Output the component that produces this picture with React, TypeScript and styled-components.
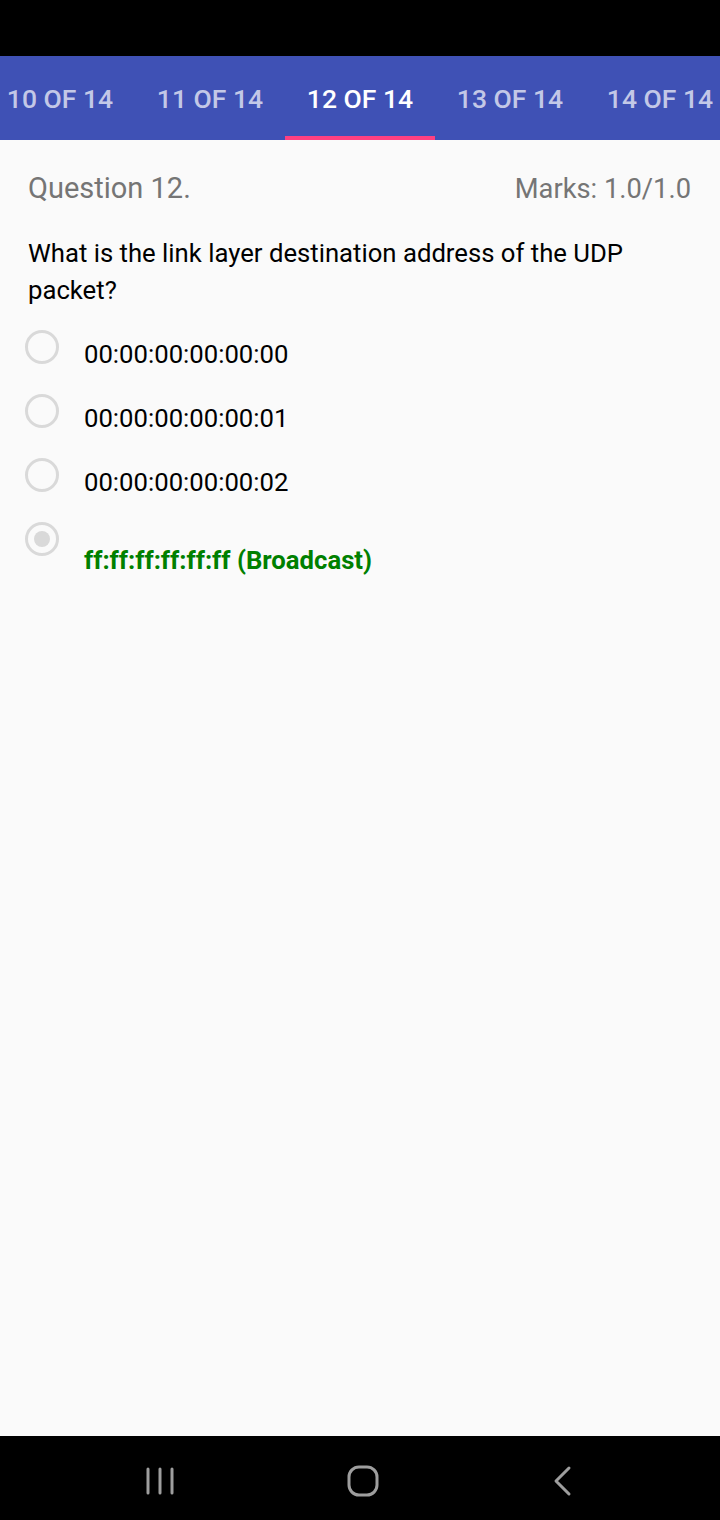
import React from "react";
import styled, { createGlobalStyle } from "styled-components";

const Global = createGlobalStyle`
  html, body { margin: 0; padding: 0; }
  body { font-family: Roboto, "Noto Sans", sans-serif; background: #000; }
  #root { width: 720px; height: 1520px; }
`;

const Screen = styled.div`
  width: 720px;
  height: 1520px;
  display: flex;
  flex-direction: column;
  overflow: hidden;
`;

const StatusBar = styled.div`
  height: 56px;
  background: #000;
  flex: none;
`;

const TabBar = styled.div`
  height: 84px;
  flex: none;
  background: #3f51b5;
  display: flex;
  overflow: hidden;
`;

const TabStrip = styled.div`
  display: flex;
  margin-left: -15px;
`;

const Tab = styled.div<{ $active?: boolean }>`
  width: 150px;
  flex: none;
  display: flex;
  align-items: center;
  justify-content: center;
  font-size: 26.5px;
  font-weight: 500;
  color: ${(p) => (p.$active ? "#ffffff" : "rgba(255,255,255,0.7)")};
  box-shadow: ${(p) => (p.$active ? "inset 0 -4px 0 #ff4081" : "none")};
  padding-top: 1px;
  box-sizing: border-box;
  white-space: nowrap;
`;

const Content = styled.div`
  flex: 1;
  background: #fafafa;
  padding: 31px 28px 0 28px;
`;

const Header = styled.div`
  display: flex;
  justify-content: space-between;
  align-items: baseline;
  font-size: 29px;
  line-height: 34px;
  color: #757575;
`;

const Marks = styled.span`
  font-size: 27.3px;
  margin-right: 1px;
`;

const QuestionText = styled.div`
  margin-top: 29px;
  font-size: 25.7px;
  line-height: 37px;
  color: #000;
`;

const Options = styled.div`
  margin-top: 15px;
  display: flex;
  flex-direction: column;
`;

const Row = styled.div`
  height: 64px;
  display: flex;
  align-items: flex-start;
  gap: 25px;
`;

const Radio = styled.div<{ $checked?: boolean }>`
  width: 34px;
  height: 34px;
  box-sizing: border-box;
  border: 3px solid #d9d9d9;
  border-radius: 50%;
  margin-left: -3px;
  margin-top: 6px;
  flex: none;
  display: flex;
  align-items: center;
  justify-content: center;
  &::after {
    content: "";
    display: ${(p) => (p.$checked ? "block" : "none")};
    width: 16px;
    height: 16px;
    border-radius: 50%;
    background: #d9d9d9;
  }
`;

const OptionText = styled.div<{ $correct?: boolean }>`
  font-size: 25.7px;
  line-height: 34px;
  margin-top: ${(p) => (p.$correct ? "27px" : "13px")};
  color: ${(p) => (p.$correct ? "#008000" : "#000")};
  font-weight: ${(p) => (p.$correct ? 700 : 400)};
`;

const NavBar = styled.div`
  height: 84px;
  flex: none;
  background: #000;
  display: flex;
  align-items: center;
  justify-content: space-between;
  padding: 5px 146px 0 144px;
  box-sizing: border-box;
`;

const NavIcon = styled.svg`
  display: block;
`;

const tabs = ["10 OF 14", "11 OF 14", "12 OF 14", "13 OF 14", "14 OF 14"];
const options = [
  { text: "00:00:00:00:00:00" },
  { text: "00:00:00:00:00:01" },
  { text: "00:00:00:00:00:02" },
  { text: "ff:ff:ff:ff:ff:ff (Broadcast)", correct: true },
];

export default function App() {
  return (
    <Screen>
      <Global />
      <StatusBar />
      <TabBar>
        <TabStrip>
          {tabs.map((t) => (
            <Tab key={t} $active={t === "12 OF 14"}>
              {t}
            </Tab>
          ))}
        </TabStrip>
      </TabBar>
      <Content>
        <Header>
          <span>Question 12.</span>
          <Marks>Marks: 1.0/1.0</Marks>
        </Header>
        <QuestionText>
          What is the link layer destination address of the UDP packet?
        </QuestionText>
        <Options>
          {options.map((o) => (
            <Row key={o.text}>
              <Radio $checked={o.correct} />
              <OptionText $correct={o.correct}>{o.text}</OptionText>
            </Row>
          ))}
        </Options>
      </Content>
      <NavBar>
        <NavIcon width="32" height="32" viewBox="0 0 32 32">
          <g stroke="#9e9e9e" strokeWidth="3" strokeLinecap="round">
            <line x1="4" y1="4" x2="4" y2="28" />
            <line x1="16" y1="4" x2="16" y2="28" />
            <line x1="28" y1="4" x2="28" y2="28" />
          </g>
        </NavIcon>
        <NavIcon width="34" height="34" viewBox="0 0 34 34">
          <rect x="3" y="3" width="28" height="28" rx="10" fill="none" stroke="#9e9e9e" strokeWidth="3" />
        </NavIcon>
        <NavIcon width="24" height="32" viewBox="0 0 24 32">
          <polyline points="19,3 6,16 19,29" fill="none" stroke="#9e9e9e" strokeWidth="3" strokeLinecap="round" strokeLinejoin="round" />
        </NavIcon>
      </NavBar>
    </Screen>
  );
}
